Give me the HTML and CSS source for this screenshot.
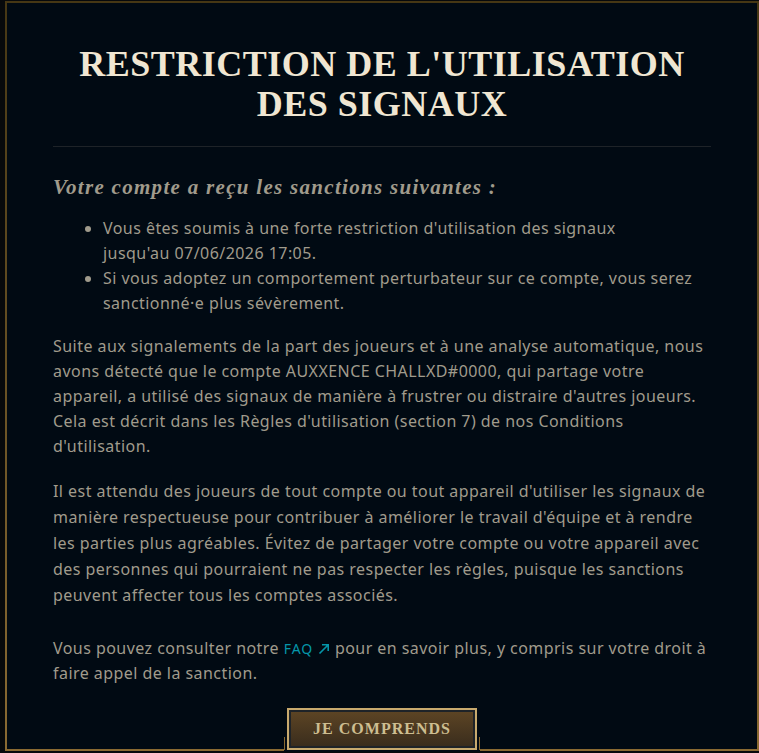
FILE: index.html
```html
<!DOCTYPE html>
<html lang="fr">
<head>
<meta charset="utf-8">
<title>Restriction de l'utilisation des signaux</title>
<link rel="stylesheet" href="styles.css">
</head>
<body>
<div class="frame">
  <div class="content">
    <h1 class="title">RESTRICTION DE L'UTILISATION<br>DES SIGNAUX</h1>
    <hr class="sep">
    <h2 class="subhead">Votre compte a reçu les sanctions suivantes :</h2>
    <ul class="list">
      <li>Vous êtes soumis à une forte restriction d'utilisation des signaux<br>jusqu'au 07/06/2026 17:05.</li>
      <li>Si vous adoptez un comportement perturbateur sur ce compte, vous serez sanctionné·e plus sévèrement.</li>
    </ul>
    <p class="para">Suite aux signalements de la part des joueurs et à une analyse automatique, nous avons détecté que le compte AUXXENCE CHALLXD#0000, qui partage votre appareil, a utilisé des signaux de manière à frustrer ou distraire d'autres joueurs. Cela est décrit dans les Règles d'utilisation (section 7) de nos Conditions d'utilisation.</p>
    <p class="para para-2">Il est attendu des joueurs de tout compte ou tout appareil d'utiliser les signaux de manière respectueuse pour contribuer à améliorer le travail d'équipe et à rendre les parties plus agréables. Évitez de partager votre compte ou votre appareil avec des personnes qui pourraient ne pas respecter les règles, puisque les sanctions peuvent affecter tous les comptes associés.</p>
    <p class="para para-3">Vous pouvez consulter notre <a class="link" href="#">FAQ<svg class="arrow" width="12" height="12" viewBox="0 0 12 12" aria-hidden="true"><path d="M1.5 10.5 L10 2 M4 1.8 H10.2 V8" fill="none" stroke="#0596aa" stroke-width="1.6"/></svg></a> pour en savoir plus, y compris sur votre droit à faire appel de la sanction.</p>
  </div>
  <div class="btn-slot">
    <button class="btn"><span class="btn-inner">JE COMPRENDS</span></button>
  </div>
</div>
</body>
</html>
```
FILE: styles.css
```css
html, body {
  margin: 0;
  padding: 0;
}
body {
  background: #07090b;
  width: 759px;
  height: 753px;
  overflow: hidden;
}
.frame {
  position: relative;
  box-sizing: border-box;
  margin: 1px 0 0 5px;
  width: 754px;
  height: 750px;
  background: #010a13;
  border: 2px solid;
  border-image: linear-gradient(to top, #8a6a32, #463714) 1;
}
.content {
  padding: 41px 46px 0 46px;
}
.title {
  margin: 0;
  text-align: center;
  font-family: "Liberation Serif", "Times New Roman", serif;
  font-weight: bold;
  font-size: 36px;
  line-height: 40px;
  letter-spacing: 0.5px;
  color: #f0e6d2;
}
.sep {
  margin: 22px 0 0 0;
  border: 0;
  height: 1px;
  background: #1e2328;
}
.subhead {
  margin: 27px 0 0 0;
  font-family: "Liberation Serif", "Times New Roman", serif;
  font-style: italic;
  font-weight: bold;
  font-size: 21px;
  line-height: 26px;
  color: #a09b8c;
  letter-spacing: 1.3px;
}
.list {
  margin: 16px 0 0 0;
  padding-left: 50px;
  font-family: "Noto Sans", "Liberation Sans", sans-serif;
  font-size: 16px;
  line-height: 25px;
  letter-spacing: 0.45px;
  color: #a09b8c;
}
.para {
  margin: 18px 0 0 0;
  font-family: "Noto Sans", "Liberation Sans", sans-serif;
  font-size: 16px;
  line-height: 25px;
  letter-spacing: 0.45px;
  color: #a09b8c;
}
.para-2 {
  margin-top: 19px;
  line-height: 26px;
}
.para-3 {
  margin-top: 28px;
}
.link {
  display: inline-block;
  color: #0596aa;
  text-decoration: none;
  font-size: 14px;
  line-height: 16px;
  letter-spacing: 1px;
}
.arrow {
  display: inline-block;
  margin-left: 5px;
  vertical-align: -1px;
}
.btn-slot {
  position: absolute;
  left: 50%;
  bottom: -3px;
  transform: translateX(-50%);
  width: 196px;
  height: 44px;
  background: #010a13;
  display: flex;
  justify-content: center;
  align-items: flex-start;
}
.btn-slot::before,
.btn-slot::after {
  content: "";
  position: absolute;
  bottom: 2px;
  width: 1px;
  height: 13px;
  background: #8a6a32;
}
.btn-slot::before { left: 0; }
.btn-slot::after { right: 0; }
.btn {
  box-sizing: border-box;
  margin: 0;
  width: 190px;
  height: 42px;
  padding: 2px;
  border: 2px solid #c8aa6e;
  background: #1e2328;
  cursor: pointer;
}
.btn-inner {
  display: flex;
  align-items: center;
  justify-content: center;
  height: 100%;
  background: linear-gradient(to bottom, #5c4424, #3a2d1d);
  font-family: "Liberation Serif", "Times New Roman", serif;
  font-weight: bold;
  font-size: 16px;
  letter-spacing: 1px;
  color: #cdbe91;
}
```
